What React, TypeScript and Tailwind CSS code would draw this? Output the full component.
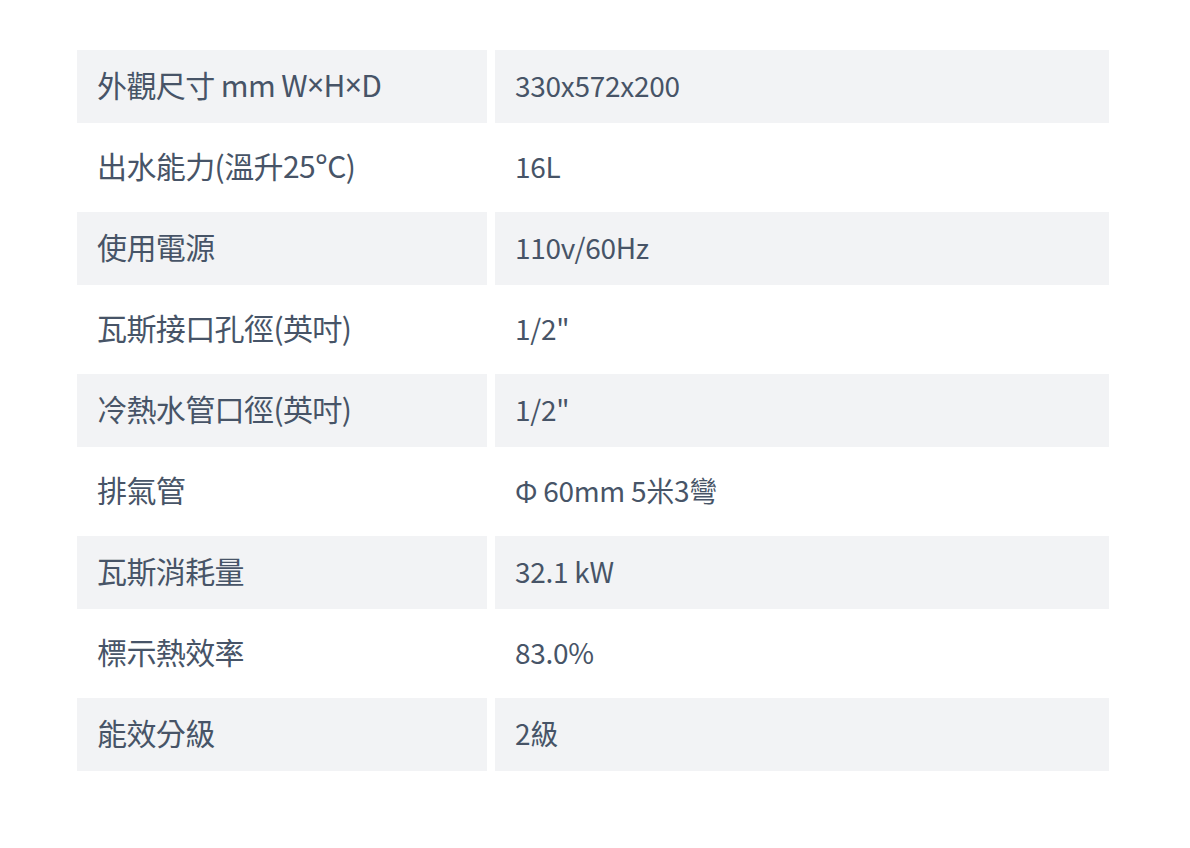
import React from "react";

type SpecRow = {
  label: React.ReactNode;
  value: string;
};

// × and ° fall back to full-width glyphs in the CJK font, so give them a Latin face
const Sym: React.FC<{ c: string }> = ({ c }) => (
  <span className="font-['Noto_Sans',sans-serif]">{c}</span>
);

const rows: SpecRow[] = [
  {
    label: (
      <>
        外觀尺寸 mm W<Sym c="×" />H<Sym c="×" />D
      </>
    ),
    value: "330x572x200",
  },
  {
    label: (
      <>
        出水能力(溫升25<Sym c="°" /> C)
      </>
    ),
    value: "16L",
  },
  { label: "使用電源", value: "110v/60Hz" },
  { label: "瓦斯接口孔徑(英吋)", value: '1/2"' },
  { label: "冷熱水管口徑(英吋)", value: '1/2"' },
  { label: "排氣管", value: "Φ 60mm 5米3彎" },
  { label: "瓦斯消耗量", value: "32.1 kW" },
  { label: "標示熱效率", value: "83.0%" },
  { label: "能效分級", value: "2級" },
];

const App: React.FC = () => {
  return (
    <div className="min-h-screen bg-white pl-[77px] pt-[50px] font-['Noto_Sans_CJK_TC',sans-serif] text-[#475467]">
      <div className="grid w-[1032px] grid-cols-[410px_1fr] gap-[8px]">
        {rows.map((row, i) => {
          const shade = i % 2 === 0 ? "bg-[#f2f3f5]" : "bg-white";
          return (
            <React.Fragment key={i}>
              <div className={`flex h-[73px] items-center px-[20px] pb-[4px] text-[30px] tracking-[-0.02em] ${shade}`}>
                {row.label}
              </div>
              <div className={`flex h-[73px] items-center px-[20px] pb-[4px] text-[28px] tracking-[-0.01em] ${shade}`}>
                {row.value}
              </div>
            </React.Fragment>
          );
        })}
      </div>
    </div>
  );
};

export default App;
